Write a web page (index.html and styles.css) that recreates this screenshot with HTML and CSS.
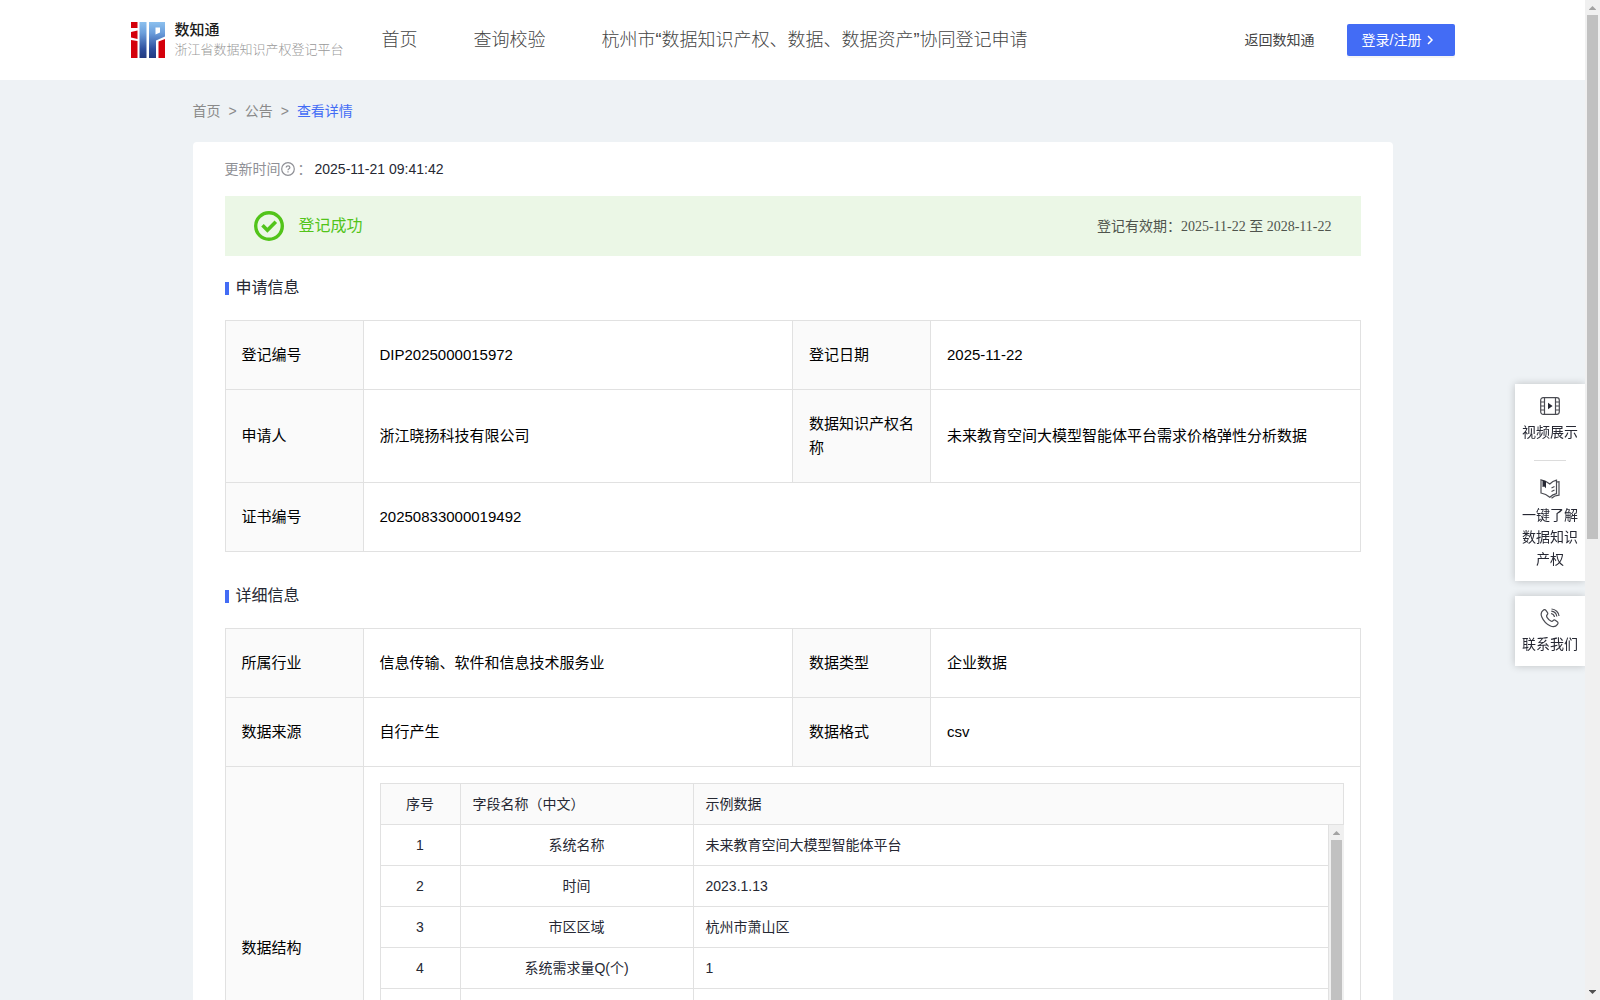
FILE: index.html
```html
<!DOCTYPE html>
<html lang="zh-CN">
<head>
<meta charset="utf-8">
<title>数知通 - 查看详情</title>
<link rel="stylesheet" href="styles.css">
</head>
<body>
<div class="shell">
  <div class="page">
    <header class="header">
      <div class="header-inner">
        <a class="brand" href="#">
          <svg class="brand-logo" viewBox="0 0 34 36" aria-hidden="true">
            <defs>
              <linearGradient id="blue" x1="0" y1="0" x2="0" y2="36" gradientUnits="userSpaceOnUse">
                <stop offset="0" stop-color="#8cc0ee"/>
                <stop offset="0.3" stop-color="#6c9fdc"/>
                <stop offset="0.75" stop-color="#2e4f9e"/>
                <stop offset="1" stop-color="#233a80"/>
              </linearGradient>
            </defs>
            <path fill="#d4000b" d="M0 0h6.500v6H0zM0 10l6.500-1.500V17L0 15.500zM0 18l6.500 1V36H0zM27.500 19.500l6.500-2.500v19h-6.500z"/>
            <path fill="url(#blue)" d="M8.500 0h7v36h-7zM18 0h16v14.500l-9 4V36h-7z"/>
            <path fill="#fff" d="M24.500 5.500H29v5l-4.500 2z"/>
          </svg>
          <span class="brand-text">
            <strong class="brand-name">数知通</strong>
            <span class="brand-sub">浙江省数据知识产权登记平台</span>
          </span>
        </a>
        <nav class="nav">
          <a href="#">首页</a>
          <a href="#">查询校验</a>
          <a href="#">杭州市“数据知识产权、数据、数据资产”协同登记申请</a>
        </nav>
        <div class="header-actions">
          <a class="back-link" href="#">返回数知通</a>
          <button class="login" type="button">登录/注册
            <svg class="chevron" viewBox="0 0 10 10" aria-hidden="true"><path d="M3 1l4 4-4 4" fill="none" stroke="currentColor" stroke-width="1.500"/></svg>
          </button>
        </div>
      </div>
    </header>

    <main class="main">
      <nav class="crumbs" aria-label="面包屑">
        <a href="#">首页</a><span>&gt;</span><a href="#">公告</a><span>&gt;</span><a class="current" href="#">查看详情</a>
      </nav>

      <article class="card">
        <div class="updated">
          <span>更新时间</span>
          <svg class="help" viewBox="0 0 14 14" aria-hidden="true">
            <circle cx="7" cy="7" r="6.300" fill="none" stroke="currentColor" stroke-width="1.200"/>
            <path d="M5.200 5.600c0-2.400 3.700-2.300 3.700-.1 0 1.300-1.900 1.300-1.900 2.800M7 9.300v1.300" fill="none" stroke="currentColor" stroke-width="1.200"/>
          </svg>
          <span class="colon">：</span>
          <time class="updated-time">2025-11-21 09:41:42</time>
        </div>

        <div class="status">
          <svg class="status-icon" viewBox="0 0 30 30" aria-hidden="true">
            <circle cx="15" cy="15" r="13.300" fill="none" stroke="currentColor" stroke-width="3.400"/>
            <path d="M8.500 14.300l4.900 4.900 8.400-8.500" fill="none" stroke="currentColor" stroke-width="3.600"/>
          </svg>
          <span class="status-text">登记成功</span>
          <span class="validity">登记有效期：<span class="validity-range">2025-11-22 至 2028-11-22</span></span>
        </div>

        <h2 class="section-title">申请信息</h2>
        <table class="info">
          <colgroup><col class="col-label"><col><col class="col-label"><col></colgroup>
          <tbody>
            <tr><th scope="row">登记编号</th><td>DIP2025000015972</td><th scope="row">登记日期</th><td>2025-11-22</td></tr>
            <tr><th scope="row">申请人</th><td>浙江晓扬科技有限公司</td><th scope="row">数据知识产权名称</th><td>未来教育空间大模型智能体平台需求价格弹性分析数据</td></tr>
            <tr><th scope="row">证书编号</th><td colspan="3">20250833000019492</td></tr>
          </tbody>
        </table>

        <h2 class="section-title">详细信息</h2>
        <table class="info">
          <colgroup><col class="col-label"><col><col class="col-label"><col></colgroup>
          <tbody>
            <tr><th scope="row">所属行业</th><td>信息传输、软件和信息技术服务业</td><th scope="row">数据类型</th><td>企业数据</td></tr>
            <tr><th scope="row">数据来源</th><td>自行产生</td><th scope="row">数据格式</th><td>csv</td></tr>
            <tr>
              <th scope="row">数据结构</th>
              <td class="nested" colspan="3">
                <table class="fields fields-head">
                  <colgroup><col class="col-no"><col class="col-name"><col></colgroup>
                  <thead><tr><th class="center" scope="col">序号</th><th scope="col">字段名称（中文）</th><th scope="col">示例数据</th></tr></thead>
                </table>
                <div class="fields-scroll">
                  <table class="fields fields-body">
                    <colgroup><col class="col-no"><col class="col-name"><col></colgroup>
                    <tbody>
                      <tr><td class="center">1</td><td class="center">系统名称</td><td>未来教育空间大模型智能体平台</td></tr>
                      <tr><td class="center">2</td><td class="center">时间</td><td>2023.1.13</td></tr>
                      <tr><td class="center">3</td><td class="center">市区区域</td><td>杭州市萧山区</td></tr>
                      <tr><td class="center">4</td><td class="center">系统需求量Q(个)</td><td>1</td></tr>
                      <tr><td></td><td></td><td></td></tr>
                    </tbody>
                  </table>
                  <div class="bar" aria-hidden="true">
                    <svg class="bar-arrow" viewBox="0 0 15 15"><path fill="#a3a3a3" d="M7.500 6L11 9.500V10H4v-.5z"/></svg>
                    <span class="bar-thumb bar-thumb-fill"></span>
                  </div>
                </div>
              </td>
            </tr>
          </tbody>
        </table>
      </article>
    </main>
  </div>

  <div class="bar" aria-hidden="true">
    <svg class="bar-arrow" viewBox="0 0 15 15"><path fill="#a3a3a3" d="M7.500 6L11 9.500V10H4v-.5z"/></svg>
    <span class="bar-thumb bar-thumb-page"></span>
    <svg class="bar-arrow bar-arrow-end" viewBox="0 0 15 15"><path fill="#505050" d="M7.500 9L11 5.500V5H4v.5z"/></svg>
  </div>
</div>

<aside class="dock">
  <div class="dock-box">
    <a class="dock-item" href="#">
      <svg class="dock-icon" viewBox="0 0 20 20" aria-hidden="true">
        <rect x="0.700" y="1.700" width="18.600" height="16.600" rx="2.500"/>
        <path d="M4.500 2v16M15.500 2v16M1 6h3.500M1 10h3.500M1 14h3.500M15.500 6H19M15.500 10H19M15.500 14H19"/>
        <path class="solid" d="M8 6.800l4.600 3.200L8 13.200z"/>
      </svg>
      <span>视频展示</span>
    </a>
    <hr class="dock-line">
    <a class="dock-item" href="#">
      <svg class="dock-icon" viewBox="0 0 20 20" aria-hidden="true">
        <path d="M1 .8c3.200.4 6.300 2 8.800 4.200C11.800 3 14 1.800 16.500 1.200v13.500c-2.500.5-4.700 1.600-6.700 3.500C7.300 16 4 14.500 1 14zM16.500 3l2.500-.3v13.500c-3 .2-5.500 1.200-7.500 3"/>
        <path d="M11.500 9l3-1.500M11.500 12.500l3-1.500"/>
        <path class="solid" d="M2.500 1l3.500 1.300v7L4.200 7.500 2.500 8z"/>
      </svg>
      <span>一键了解数据知识产权</span>
    </a>
  </div>
  <div class="dock-box">
    <a class="dock-item" href="#">
      <svg class="dock-icon" viewBox="0 0 20 20" aria-hidden="true">
        <path d="M3.200 2.200c1-.9 2-.7 2.700.2l1.600 2.200c.5.800.4 1.500-.3 2.200-1 .9-.9 1.500 0 2.800 1 1.500 2.200 2.700 3.600 3.400 1 .5 1.600.4 2.300-.4.700-.8 1.400-.9 2.200-.3l2 1.500c.9.700 1 1.600.2 2.600-1.700 2.300-4.500 2.800-7.500 1.300C6.500 16 3.500 13 1.800 9 .6 6.200 1.100 3.800 3.200 2.200z"/>
        <path d="M11 5.500c1.900.3 3.200 1.700 3.500 3.500M11.300 3.200c2.900.3 5.100 2.500 5.500 5.300M11.500 1c4 .2 7.300 3.300 7.500 7"/>
      </svg>
      <span>联系我们</span>
    </a>
  </div>
</aside>
</body>
</html>
```

FILE: styles.css
```css
* { box-sizing: border-box; }

body {
  margin: 0;
  background: #eef2f5;
  color: #262833;
  font-family: "Liberation Sans", "Noto Sans CJK SC", sans-serif;
  font-size: 14px;
  line-height: 22px;
}

a { color: inherit; text-decoration: none; }

.shell {
  display: grid;
  grid-template-columns: minmax(0, 1fr) 15px;
  height: 100vh;
}

.page { overflow-y: auto; scrollbar-width: none; }

/* header */
.header { background: #fff; }

.header-inner {
  display: flex;
  align-items: center;
  max-width: 1324px;
  height: 80px;
  margin: 0 auto;
  white-space: nowrap;
}

.brand { display: flex; align-items: center; gap: 10px; width: 251px; }
.brand-logo { width: 34px; height: 36px; }
.brand-text { display: flex; flex-direction: column; }
.brand-name { color: #1c1c1c; font-size: 15px; font-weight: 500; line-height: 20px; }
.brand-sub { color: #999; font-size: 13px; font-weight: 300; line-height: 20px; }

.nav {
  display: flex;
  gap: 56px;
  color: #444;
  font-size: 18px;
  font-weight: 300;
}

.header-actions { display: flex; align-items: center; gap: 32px; margin-left: auto; color: #444; }

.login {
  display: flex;
  align-items: center;
  gap: 4px;
  width: 108px;
  height: 32px;
  padding: 0 15px;
  border: 0;
  border-radius: 2px;
  background: #436cf5;
  box-shadow: 0 2px 0 rgba(0, 0, 0, 0.04);
  color: #fff;
  font: inherit;
}

.chevron { width: 10px; height: 10px; }

/* body */
.main { max-width: 1200px; margin: 0 auto; }

.crumbs {
  display: flex;
  align-items: center;
  gap: 8px;
  height: 62px;
  color: #8a8a8a;
}

.crumbs .current { color: #436cf5; }

.card { padding: 16px 32px 32px; border-radius: 4px; background: #fff; }

.updated { display: flex; align-items: center; color: #8f9096; }
.help { width: 14px; height: 14px; }
.colon { padding: 0 3px; }
.updated-time { color: #262833; }

.status {
  display: flex;
  align-items: center;
  gap: 15px;
  height: 60px;
  margin-top: 16px;
  padding: 0 29px;
  background: #ebf7e6;
}

.status-icon { width: 30px; height: 30px; color: #52c41a; }
.status-text { color: #52c41a; font-size: 16px; }
.validity { margin-left: auto; color: #4f544d; }
.validity-range { font-family: "Liberation Serif", "Noto Sans CJK SC", serif; }

.section-title {
  display: flex;
  align-items: center;
  gap: 7px;
  margin: 0;
  padding: 20px 0;
  font-size: 16px;
  font-weight: 400;
  line-height: 24px;
}

.section-title::before { width: 4px; height: 13px; background: #436cf5; content: ""; }

.info {
  width: 100%;
  border-collapse: collapse;
  table-layout: fixed;
  color: #000;
  font-size: 15px;
  line-height: 24px;
}

.info + .section-title { padding-top: 32px; }

.col-label { width: 138px; }

.info th,
.info td {
  padding: 22px 16px;
  border: 1px solid #e1e1e1;
  font-weight: 400;
  text-align: left;
}

.info th { background: #fafafa; }
.info .nested { padding: 16px; }

/* nested field list */
.fields {
  width: 100%;
  border-collapse: collapse;
  table-layout: fixed;
  color: #262833;
  font-size: 14px;
  line-height: 22px;
}

.col-no { width: 80px; }
.col-name { width: 233px; }

.info .fields th,
.info .fields td { height: 41px; padding: 9px 12px; }
.info .fields .center { text-align: center; }
.info .fields-body tr:first-child td { height: 40px; border-top: 0; }

.fields-scroll { display: flex; align-items: flex-start; height: 287px; overflow: hidden; }
.fields-body { flex: 1; }

/* scroll bars */
.bar {
  display: flex;
  flex: 0 0 15px;
  flex-direction: column;
  align-self: stretch;
  align-items: center;
  background: #f0f0f0;
}

.bar-arrow { flex: none; width: 15px; height: 15px; }
.bar-arrow-end { margin-top: auto; }
.bar-thumb { width: 11px; background: #c1c1c1; }
.bar-thumb-page { height: calc(54% - 16px); }
.bar-thumb-fill { flex: 1; }

/* floating shortcuts */
.dock {
  position: fixed;
  top: 384px;
  right: 15px;
  display: flex;
  flex-direction: column;
  gap: 15px;
  width: 70px;
}

.dock-box { background: #fff; box-shadow: 0 0 8px rgba(0, 0, 0, 0.2); clip-path: inset(-10px 0 -10px -10px); }

.dock-item {
  display: flex;
  flex-direction: column;
  align-items: center;
  gap: 5px;
  padding: 12px 7px 11px;
  text-align: center;
}

.dock-icon {
  width: 20px;
  height: 20px;
  fill: none;
  stroke: #4a4b52;
  stroke-width: 1.2;
}

.dock-icon .solid { fill: #262833; stroke: none; }

.dock-line { width: 32px; height: 1px; margin: 6px auto; border: 0; background: #dcdcdc; }
```
